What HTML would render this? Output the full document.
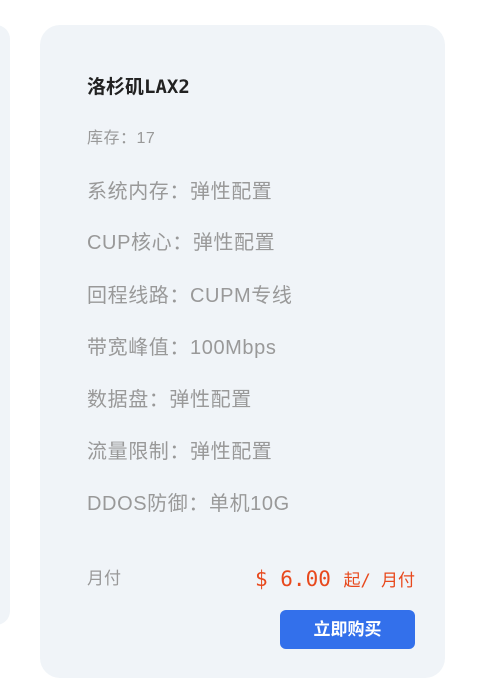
<!DOCTYPE html>
<html><head><meta charset="utf-8"><style>
body{margin:0;width:493px;height:695px;background:#fff;position:relative;overflow:hidden;font-family:"Liberation Sans","Noto Sans CJK SC",sans-serif}
.lc{position:absolute;left:-100px;top:25px;width:110px;height:600px;background:#f0f4f8;border-radius:14px}
.card{position:absolute;left:40px;top:25px;width:405px;height:653px;background:#f0f4f8;border-radius:20px}
.t{position:absolute;left:47px;top:50px;font:bold 19px "DejaVu Sans Mono","Noto Sans CJK SC",monospace;color:#222;line-height:24px}
.s{position:absolute;left:47px;top:104px;font-size:16px;letter-spacing:0.5px;color:#999;line-height:20px}
.l{position:absolute;left:47px;font-size:20px;letter-spacing:0.6px;color:#999;line-height:24px}
.m{position:absolute;left:47px;top:543px;font-size:17px;color:#999;line-height:22px}
.p{position:absolute;right:30px;top:540px;color:#e8491d;font:21px "DejaVu Sans Mono","Noto Sans CJK SC",monospace;line-height:28px}
.p small{font-size:17px}
.b{position:absolute;left:240px;top:585px;width:135px;height:39px;background:#3370eb;border-radius:6px;color:#fff;font-weight:bold;font-size:17px;text-align:center;line-height:39px}
</style></head><body>
<div class="lc"></div>
<div class="card">
<div class="t">洛杉矶LAX2</div>
<div class="s">库存：17</div>
<div class="l" style="top:155px">系统内存：弹性配置</div>
<div class="l" style="top:206px">CUP核心：弹性配置</div>
<div class="l" style="top:259px">回程线路：CUPM专线</div>
<div class="l" style="top:311px">带宽峰值：100Mbps</div>
<div class="l" style="top:363px">数据盘：弹性配置</div>
<div class="l" style="top:415px">流量限制：弹性配置</div>
<div class="l" style="top:467px">DDOS防御：单机10G</div>
<div class="m">月付</div>
<div class="p">$ 6.00 <small>起/ 月付</small></div>
<div class="b">立即购买</div>
</div>
</body></html>
